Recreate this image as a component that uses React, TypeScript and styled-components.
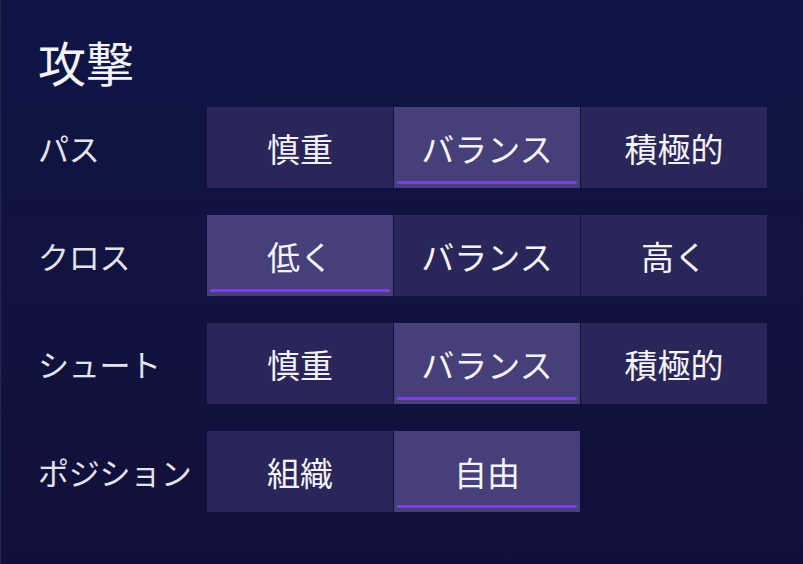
import styled, { createGlobalStyle } from 'styled-components';

const GlobalStyle = createGlobalStyle`
  html, body {
    margin: 0;
    padding: 0;
    background: #10123f;
  }
  * {
    box-sizing: border-box;
  }
`;

const StyledPanel = styled.div(() => ({
  width: '803px',
  height: '564px',
  padding: '33px 0 0 40px',
  background: 'linear-gradient(180deg, #0e1545 0%, #111240 55%, #12103a 100%)',
  boxShadow: 'inset 1px 0 0 #23284f',
  fontFamily: '"Noto Sans CJK JP", "Noto Sans", sans-serif',
  color: '#f2f1f6',
  overflow: 'hidden',
}));

const StyledTitle = styled.h1(() => ({
  margin: '0 0 18px -2px',
  fontSize: '48px',
  lineHeight: '56px',
  fontWeight: 400,
  color: '#f4f4f8',
}));

const StyledRows = styled.div(() => ({
  display: 'flex',
  flexDirection: 'column',
  gap: '27px',
}));

const StyledRow = styled.div(() => ({
  display: 'flex',
  alignItems: 'center',
}));

const StyledLabel = styled.div(() => ({
  width: '167px',
  marginLeft: '-2px',
  paddingRight: '0',
  fontSize: '31px',
  lineHeight: '40px',
  color: '#e4e3ec',
  whiteSpace: 'nowrap',
  letterSpacing: '-0.3px',
}));

const StyledGroup = styled.div(() => ({
  display: 'flex',
  gap: '1px',
  marginLeft: '2px',
}));

const StyledOption = styled.button<{ $active?: boolean }>(({ $active }) => ({
  position: 'relative',
  width: '186px',
  height: '81px',
  border: 'none',
  padding: 0,
  display: 'flex',
  alignItems: 'center',
  justifyContent: 'center',
  backgroundColor: $active ? '#463f79' : '#2b2659',
  color: '#f4f3f8',
  fontFamily: 'inherit',
  fontSize: '33px',
  fontWeight: 400,
  cursor: 'pointer',
  '&::after': $active
    ? {
        content: '""',
        position: 'absolute',
        left: '3px',
        right: '3px',
        bottom: '4px',
        height: '3px',
        borderRadius: '2px',
        backgroundColor: '#7b3fe6',
      }
    : {},
}));

const StyledFooterLine = styled.div(() => ({
  marginTop: '27px',
  marginRight: '23px',
  borderTop: '1px solid rgba(255, 255, 255, 0.018)',
}));

interface SettingRow {
  label: string;
  options: string[];
  selected: number;
}

const rows: SettingRow[] = [
  { label: 'パス', options: ['慎重', 'バランス', '積極的'], selected: 1 },
  { label: 'クロス', options: ['低く', 'バランス', '高く'], selected: 0 },
  { label: 'シュート', options: ['慎重', 'バランス', '積極的'], selected: 1 },
  { label: 'ポジション', options: ['組織', '自由'], selected: 1 },
];

export default function App() {
  return (
    <>
      <GlobalStyle />
      <StyledPanel>
        <StyledTitle>攻撃</StyledTitle>
        <StyledRows>
          {rows.map((row) => (
            <StyledRow key={row.label}>
              <StyledLabel>{row.label}</StyledLabel>
              <StyledGroup>
                {row.options.map((opt, i) => (
                  <StyledOption key={opt} $active={i === row.selected}>
                    {opt}
                  </StyledOption>
                ))}
              </StyledGroup>
            </StyledRow>
          ))}
        </StyledRows>
        <StyledFooterLine />
      </StyledPanel>
    </>
  );
}
